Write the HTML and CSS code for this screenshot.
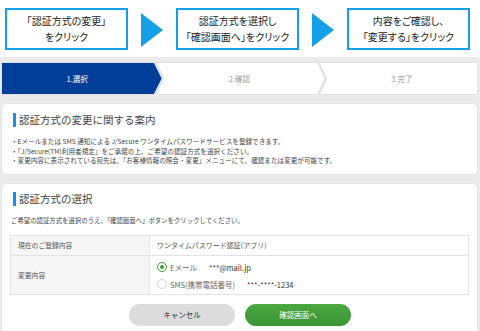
FILE: index.html
```html
<!DOCTYPE html>
<html lang="ja">
<head>
<meta charset="utf-8">
<link rel="stylesheet" href="styles.css">
</head>
<body>
<div class="flow">
  <div class="fbox">「認証方式の変更」<br>をクリック</div>
  <svg class="farrow" width="22" height="34" viewBox="0 0 22 34"><polygon points="0,0 22,17 0,34" fill="#14a0e6"/></svg>
  <div class="fbox">認証方式を選択し<br>「確認画面へ」をクリック</div>
  <svg class="farrow" width="22" height="34" viewBox="0 0 22 34"><polygon points="0,0 22,17 0,34" fill="#14a0e6"/></svg>
  <div class="fbox">内容をご確認し、<br>「変更する」をクリック</div>
</div>
<div class="main">
  <div class="steps">
    <div class="step active">1.選択</div>
    <svg class="sep" width="12" height="31" viewBox="0 0 12 31"><polygon points="0,0 2,0 10,15.5 2,31 0,31" fill="#003e97"/><polyline points="3,-1 11,15.5 3,32" fill="none" stroke="#e2e2e2" stroke-width="2.5"/></svg>
    <div class="step">2.確認</div>
    <svg class="sep" width="12" height="31" viewBox="0 0 12 31"><polyline points="3,-1 11,15.5 3,32" fill="none" stroke="#e2e2e2" stroke-width="2.5"/></svg>
    <div class="step">3.完了</div>
  </div>

  <div class="card">
    <h2 class="ttl">認証方式の変更に関する案内</h2>
    <ul class="notes">
      <li>・Eメールまたは SMS 通知による J/Secure ワンタイムパスワードサービスを登録できます。</li>
      <li>・「J/Secure(TM)利用者規定」をご承諾の上、ご希望の認証方式を選択ください。</li>
      <li>・変更内容に表示されている宛先は、「お客様情報の照会・変更」メニューにて、確認または変更が可能です。</li>
    </ul>
  </div>

  <div class="card card2">
    <h2 class="ttl">認証方式の選択</h2>
    <p class="lead">ご希望の認証方式を選択のうえ、「確認画面へ」ボタンをクリックしてください。</p>
    <div class="tbl">
      <div class="row">
        <div class="th">現在のご登録内容</div>
        <div class="td">ワンタイムパスワード認証(アプリ)</div>
      </div>
      <div class="row">
        <div class="th">変更内容</div>
        <div class="td opts">
          <div class="opt"><span class="radio on"></span><span class="olabel">Eメール</span><span class="oval">***@mail.jp</span></div>
          <div class="opt"><span class="radio"></span><span class="olabel">SMS(携帯電話番号)</span><span class="oval">***-****-1234</span></div>
        </div>
      </div>
    </div>
    <div class="btns">
      <div class="btn cancel">キャンセル</div>
      <div class="btn ok">確認画面へ</div>
    </div>
  </div>
</div>
</body>
</html>
```
FILE: styles.css
```css
html, body { margin: 0; padding: 0; }
body {
  width: 480px;
  height: 331px;
  overflow: hidden;
  font-family: "Noto Sans CJK JP", "Noto Sans", sans-serif;
  color: #333;
  background: #fff;
}
.flow {
  display: flex;
  padding: 8px 5px 0 5px;
  height: 49px;
  align-items: flex-start;
}
.fbox {
  width: 119px;
  height: 38px;
  border: 2px solid #14a0e6;
  display: flex;
  align-items: center;
  justify-content: center;
  text-align: center;
  font-size: 10px;
  line-height: 16px;
  color: #222;
  font-feature-settings: "palt";
  flex: none;
}
.farrow { margin: 5px 13px 0 13px; flex: none; }

.main {
  background: #ebebeb;
  padding: 6px 3px 0 2px;
  height: 268px;
}
.steps {
  display: flex;
  height: 31px;
  background: #fff;
  box-shadow: 0 0 1px rgba(0,0,0,.25);
}
.step {
  flex: 1;
  display: flex;
  align-items: center;
  justify-content: center;
  font-size: 7.5px;
  color: #9a9a9a;
}
.step.active { background: #003e97; color: #fff; }
.sep { flex: none; display: block; }

.card {
  background: #fff;
  border-radius: 4px;
  margin-top: 10px;
  padding: 9px 8px 8px 9px;
  box-shadow: 0 0 1px rgba(0,0,0,.2);
}
.ttl {
  margin: 0;
  font-size: 10.5px;
  font-weight: normal;
  line-height: 14px;
  color: #444;
  border-left: 3px solid #1a8fe6;
  padding-left: 3px;
  margin-left: 2px;
}
.notes {
  list-style: none;
  margin: 10px 0 0 0;
  padding: 0;
  font-size: 6.6px;
  line-height: 9.5px;
  color: #444;
}
.card2 { padding-top: 8px; padding-bottom: 20px; }
.lead {
  margin: 10px 0 0 0;
  font-size: 6.4px;
  line-height: 10px;
  color: #444;
}
.tbl {
  margin: 9px 0 0 -1px;
  border: 1px solid #e3e3e3;
}
.row { display: flex; }
.row + .row { border-top: 1px solid #e3e3e3; }
.th {
  width: 131px;
  background: #f6f6f6;
  padding-left: 7px;
  font-size: 6.8px;
  color: #555;
  display: flex;
  align-items: center;
  border-right: 1px solid #e8e8e8;
}
.td {
  flex: 1;
  padding-left: 7px;
  font-size: 7px;
  color: #555;
  height: 19px;
  display: flex;
  align-items: center;
}
.td.opts {
  height: auto;
  flex-direction: column;
  align-items: flex-start;
  padding-top: 3px;
  padding-bottom: 1px;
}
.opt {
  display: flex;
  align-items: center;
  height: 17px;
  font-size: 7.5px;
  color: #444;
}
.radio {
  width: 8px;
  height: 8px;
  border-radius: 50%;
  border: 1px solid #d6d6d6;
  margin-right: 3px;
  box-sizing: content-box;
  position: relative;
  display: inline-block;
}
.radio.on { border-color: #3a9a3a; }
.radio.on::after {
  content: "";
  position: absolute;
  left: 2px; top: 2px;
  width: 4px; height: 4px;
  border-radius: 50%;
  background: #3a9a3a;
}
.olabel { margin-right: 12px; color: #666; }
.oval { color: #333; }
.btns {
  display: flex;
  justify-content: center;
  gap: 10px;
  margin-top: 9px;
}
.btn {
  width: 106px;
  height: 22px;
  border-radius: 11px;
  display: flex;
  align-items: center;
  justify-content: center;
  font-size: 7.5px;
}
.cancel { background: #dcdcdc; color: #333; }
.ok { background: linear-gradient(#4aa841, #3a9433); color: #fff; }
```
